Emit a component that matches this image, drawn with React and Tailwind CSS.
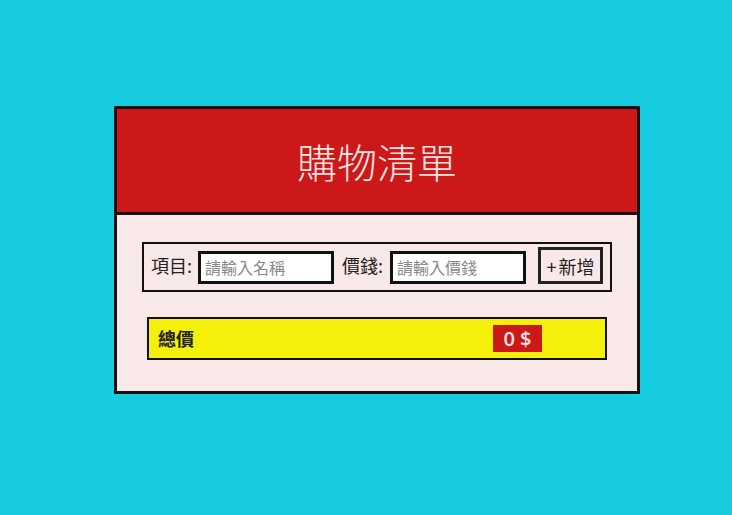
import React, { useState } from 'react';

const cjk = { fontFamily: '"Noto Sans CJK TC", "Noto Sans", sans-serif' };

export default function App() {
  const [name, setName] = useState('');
  const [price, setPrice] = useState('');
  const [items, setItems] = useState([]);

  const total = items.reduce((sum, item) => sum + item.price, 0);

  const addItem = () => {
    if (!name || !price) return;
    setItems([...items, { name, price: Number(price) || 0 }]);
    setName('');
    setPrice('');
  };

  return (
    <div className="min-h-[515px] bg-[#17cbe0] pt-[106px] pl-[114px]" style={cjk}>
      <div className="w-[526px] border-[3px] border-[#111] bg-[#f8e8e8]">
        {/* Header */}
        <div className="h-[106px] bg-[#cc1818] border-b-[3px] border-[#111] flex items-center justify-center">
          <h1 className="text-[40px] font-light text-[#fbe3e3] leading-none">購物清單</h1>
        </div>

        {/* Body */}
        <div className="pt-[27px] px-[25px] pb-[31px]">
          <div className="h-[50px] border-2 border-[#111] flex items-center pl-[7px]">
            <span className="w-[47px] text-[18px] text-[#222] mb-[3px]">項目:</span>
            <input
              value={name}
              onChange={(e) => setName(e.target.value)}
              placeholder="請輸入名稱"
              className="w-[136px] h-[33px] border-[3px] border-[#111] bg-white px-[4px] text-[16px] text-[#222] placeholder:text-[#888] outline-none"
            />
            <span className="ml-[8px] w-[48px] text-[18px] text-[#222] mb-[3px]">價錢:</span>
            <input
              value={price}
              onChange={(e) => setPrice(e.target.value)}
              placeholder="請輸入價錢"
              className="w-[136px] h-[33px] border-[3px] border-[#111] bg-white px-[4px] text-[16px] text-[#222] placeholder:text-[#888] outline-none"
            />
            <button
              onClick={addItem}
              className="ml-[12px] w-[65px] h-[37px] mb-[3px] border-[3px] border-[#222] bg-[#f8e8e8] text-[18px] text-[#222] flex items-center justify-center leading-none"
            >
              <span className="mr-[2px]">+</span>新增
            </button>
          </div>

          <div className="mt-[25px] mx-[5px] h-[43px] border-2 border-[#111] bg-[#f5ef0c] flex items-center pl-[9px]">
            <span className="w-[335px] text-[18px] font-bold text-[#222]">總價</span>
            <span
              className="w-[49px] h-[27px] bg-[#cc1818] text-[#fbe3e3] text-[20px] font-semibold flex items-center justify-center leading-none"
              style={{ fontFamily: '"Open Sans", sans-serif' }}
            >
              {total} $
            </span>
          </div>
        </div>
      </div>
    </div>
  );
}
